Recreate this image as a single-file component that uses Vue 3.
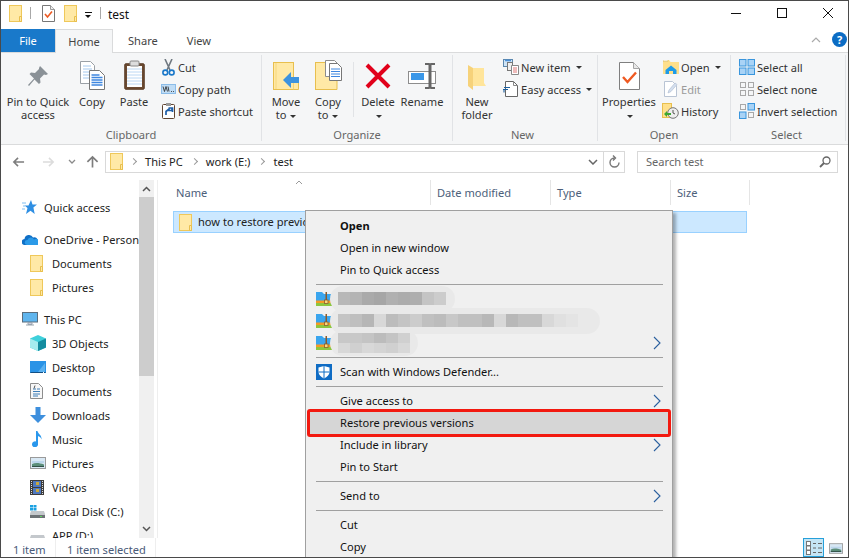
<script setup>
const clipboardLarge = [
  { icon: 'pin', w: 74, iw: 22, ih: 25, lines: ['Pin to Quick', 'access'] },
  { icon: 'copy', w: 34, iw: 25, ih: 29, lines: ['Copy'] },
  { icon: 'paste', w: 50, iw: 21, ih: 30, lines: ['Paste'] }
]
const clipboardSmall = [
  { icon: 'cut', text: 'Cut', iw: 13, ih: 17 },
  { icon: 'copypath', text: 'Copy path', iw: 15, ih: 10 },
  { icon: 'shortcut', text: 'Paste shortcut', iw: 13, ih: 16 }
]
const organizeA = [
  { icon: 'moveto', w: 40, iw: 27, ih: 28, lines: ['Move', 'to'], caretInline: true },
  { icon: 'copyto', w: 44, iw: 27, ih: 30, lines: ['Copy', 'to'], caretInline: true }
]
const organizeB = [
  { icon: 'delete', w: 40, iw: 26, ih: 27, lines: ['Delete'], caretBelow: true },
  { icon: 'rename', w: 48, iw: 28, ih: 27, lines: ['Rename'] }
]
const newSmall = [
  { icon: 'newitem', text: 'New item', iw: 16, ih: 16, caret: true },
  { icon: 'easy', text: 'Easy access', iw: 15, ih: 16, caret: true }
]
const openSmall = [
  { icon: 'open', text: 'Open', iw: 16, ih: 14, caret: true },
  { icon: 'edit', text: 'Edit', iw: 14, ih: 16, dim: true },
  { icon: 'history', text: 'History', iw: 17, ih: 16 }
]
const selectSmall = [
  { icon: 'selall', text: 'Select all' },
  { icon: 'selnone', text: 'Select none' },
  { icon: 'selinv', text: 'Invert selection' }
]
const nav = [
  { icon: 'quick', text: 'Quick access', top: 15, sub: false, iw: 15, ih: 14 },
  { icon: 'cloud', text: 'OneDrive - Personal', top: 8, sub: false, iw: 16, ih: 11 },
  { icon: 'folder', text: 'Documents', sub: true, iw: 13, ih: 17 },
  { icon: 'folder', text: 'Pictures', sub: true, iw: 13, ih: 17 },
  { icon: 'pc', text: 'This PC', top: 8, sub: false, iw: 16, ih: 14 },
  { icon: 'cube', text: '3D Objects', sub: true, iw: 16, ih: 16 },
  { icon: 'desktop', text: 'Desktop', sub: true, iw: 16, ih: 12 },
  { icon: 'docs', text: 'Documents', sub: true, iw: 13, ih: 16 },
  { icon: 'down', text: 'Downloads', sub: true, iw: 16, ih: 16 },
  { icon: 'music', text: 'Music', sub: true, iw: 13, ih: 16 },
  { icon: 'pics', text: 'Pictures', sub: true, iw: 16, ih: 12 },
  { icon: 'video', text: 'Videos', sub: true, iw: 14, ih: 15 },
  { icon: 'disk', text: 'Local Disk (C:)', sub: true, iw: 15, ih: 13 },
  { icon: 'disk2', text: 'APP (D:)', sub: true, iw: 15, ih: 13 }
]
const columns = [
  { text: 'Name', w: 256 },
  { text: 'Date modified', w: 120 },
  { text: 'Type', w: 120 },
  { text: 'Size', w: 79 }
]
const mosaics = [
  { width: 125, cells: [0xb8, 0xb4, 0xaa, 0xa6, 0xb0, 0xac, 0xae, 0xc4, 0xcc] },
  { width: 270, cells: [0xc4, 0xbf, 0xb6, 0xd8, 0xbc, 0xc4, 0xcc, 0xc0, 0xbc, 0xc8, 0xc0, 0xc0, 0xb8, 0xd8, 0xb8, 0xc0, 0xc0, 0xd8, 0xe0, 0xe4] },
  { width: 88, cells: [0xc8, 0xc8, 0xc4, 0xbc, 0xc4, 0xd0, 0xd8, 0xd0, 0xd8, 0xd4, 0xd0, 0xd8] }
]
const grey = v => `rgb(${v},${v},${v})`
</script>

<template>
  <svg class="defs" width="0" height="0" aria-hidden="true">
    <symbol id="folder" viewBox="0 0 13 17"><rect x=".5" y=".5" width="12" height="16" fill="#ffe9a6" stroke="#efc85a"/><path d="M10.500 11.500h2v5h-2z" fill="#ffe9a6" stroke="#e8bf4e"/></symbol>
    <symbol id="doccheck" viewBox="0 0 13 17"><path d="M.5.500h8l4 4v12H.5z" fill="#fff" stroke="#777"/><path d="M8.500.500v4h4" fill="#eee" stroke="#999"/><path d="M3 9l2.500 3L10 6.500" fill="none" stroke="#ec5b24" stroke-width="1.600"/></symbol>
    <symbol id="pin" viewBox="0 0 22 25"><path d="M13 1l8 8-2 1-2-.5-4 4 .5 4-1.500 1.500-4.500-4.500L2 21l-1-1 6-6.500L2.500 9 4 7.500l4 .5 4-4L12 3z" fill="#8a9197"/></symbol>
    <symbol id="copy" viewBox="0 0 25 29"><path d="M.5.500h10l4 4v18H.5z" fill="#fff" stroke="#9aa0a6"/><path d="M3 5h8M3 8h9M3 11h9M3 14h9M3 17h9" stroke="#a4c8ee"/><path d="M9.500 9.500h10l5 5v14h-15z" fill="#fff" stroke="#777"/><path d="M11.500 14h8M11.500 16.500h11M11.500 19h11M11.500 21.500h11M11.500 24h11" stroke="#3f87e0" stroke-width="1.300"/></symbol>
    <symbol id="paste" viewBox="0 0 21 30"><rect x=".75" y="3.750" width="19.500" height="25.500" rx="1" fill="#6b4a32" stroke="#5a3c26"/><rect x="3" y="6" width="15" height="21" fill="#fff"/><path d="M3 9h15M3 12h15M3 15h15M3 18h15M3 21h15M3 24h15" stroke="#bcd8f4"/><rect x="6" y="1" width="9" height="5" rx="1" fill="#ddd" stroke="#888"/></symbol>
    <symbol id="cut" viewBox="0 0 13 17"><path d="M3 0l5 11M10 0L5 11" stroke="#6f7880" stroke-width="1.600" fill="none"/><circle cx="3.300" cy="13.500" r="2.400" fill="none" stroke="#1a78c9" stroke-width="1.600"/><circle cx="9.700" cy="13.500" r="2.400" fill="none" stroke="#1a78c9" stroke-width="1.600"/></symbol>
    <symbol id="copypath" viewBox="0 0 15 10"><rect x=".5" y=".5" width="14" height="9" fill="#bfdcf5" stroke="#8bbce8"/><path d="M2 2.500l1.500 5 1.500-5 1.500 5M7 2.500l1 5" stroke="#333" fill="none" stroke-width=".9"/><path d="M10 7.500h.8M12 7.500h.8" stroke="#333"/></symbol>
    <symbol id="shortcut" viewBox="0 0 13 16"><rect x=".5" y="1.500" width="12" height="14" rx="1" fill="#fff" stroke="#5f4431"/><rect x="4" y="0" width="5" height="3" fill="#999"/><path d="M4 12V8.500L7 6v1.500h3V5.500M6.500 5h4v4" fill="none" stroke="#1f5fa8" stroke-width="1.700"/></symbol>
    <symbol id="moveto" viewBox="0 0 27 28"><rect x=".5" y=".5" width="20" height="27" fill="#ffe9a6" stroke="#e8bf4e"/><path d="M3 1v26" stroke="#f6d77c"/><path d="M20.500 19.500h5v8h-5" fill="#ffe9a6" stroke="#e8bf4e"/><path d="M10 18l8-8v5h8v6h-8v5z" fill="#3d93de"/></symbol>
    <symbol id="copyto" viewBox="0 0 27 30"><rect x=".5" y="2.500" width="21" height="27" fill="#ffe9a6" stroke="#e8bf4e"/><path d="M18 19.500h4v10h-4" fill="#ffe9a6" stroke="#e8bf4e"/><path d="M10.500.500h9l3 3v13h-12z" fill="#fff" stroke="#8c8c8c"/><path d="M14.500 3.500h8l4 4v13h-12z" fill="#fff" stroke="#777"/><path d="M16 9h9M16 11.500h9M16 14h9M16 16.500h9" stroke="#3f87e0"/></symbol>
    <symbol id="delete" viewBox="0 0 26 27"><path d="M2 2l22 22M24 2L2 24" stroke="#e1001a" stroke-width="4"/></symbol>
    <symbol id="rename" viewBox="0 0 28 27"><rect x=".5" y="8.500" width="27" height="12" fill="#fff" stroke="#8d8d8d"/><rect x="3" y="10" width="13" height="7" fill="#3a97e8"/><path d="M17 1h4l1 1 1-1h4M17 25h4l1-1 1 1h4" stroke="#666" stroke-width="1.800" fill="none"/><path d="M22 2v22" stroke="#666" stroke-width="3"/></symbol>
    <symbol id="newfolder" viewBox="0 0 20 26"><path d="M1 1l5 3v22L1 22z" fill="#f6d27a"/><path d="M6 4h11v15l2 3H6z" fill="#ffe59b"/></symbol>
    <symbol id="newitem" viewBox="0 0 16 16"><rect x=".5" y=".5" width="9" height="7" fill="#cfe4f6" stroke="#5b87ad"/><path d="M2 1.500h6" stroke="#4a90d9" stroke-width="1.500"/><rect x="4.500" y="3.500" width="5" height="8" fill="#f0f0f0" stroke="#777"/><path d="M8.500 6.500h7v9h-7z" fill="#fff" stroke="#888"/><path d="M10 9h4M10 11h4M10 13h4" stroke="#d77"/></symbol>
    <symbol id="easy" viewBox="0 0 15 16"><path d="M2.500.500h8l4 4v11h-12z" fill="#fff" stroke="#666"/><path d="M10.500.500v4h4" fill="none" stroke="#888"/><path d="M1 6.500h6M0 8.500h5M1 8.500v3" stroke="#1b5f9e" stroke-width="1.100" fill="none"/></symbol>
    <symbol id="props" viewBox="0 0 21 28"><path d="M.5.500h14l6 6v21H.5z" fill="#fff" stroke="#7f7f7f"/><path d="M14.500.500v6h6" fill="#e8e8e8" stroke="#a5a5a5"/><path d="M4 15l4.500 5L17 10.500" fill="none" stroke="#ef5a22" stroke-width="2.400"/></symbol>
    <symbol id="open" viewBox="0 0 16 14"><path d="M0 0h6l1.500 2H16v12H0z" fill="#ffdf8a"/><path d="M0 0h5v1.500H0z" fill="#fff" stroke="#d6b04a" stroke-width=".5"/><path d="M2.500 10L8 5.500 13.500 10v4H10v-3H6v3H2.500z" fill="#1e9be8"/></symbol>
    <symbol id="edit" viewBox="0 0 14 16"><path d="M.5.500h8l4 4v11H.5z" fill="#fff" stroke="#b9c4d4"/><path d="M4 12l1-3 6-7 2 1.500-6 7z" fill="#d4dfee" stroke="#b4c2d6" stroke-width=".7"/></symbol>
    <symbol id="history" viewBox="0 0 17 16"><rect x=".5" y=".5" width="9" height="14" fill="#ffe08c" stroke="#e8bf4e"/><circle cx="11" cy="10" r="5.300" fill="#eee" stroke="#777"/><path d="M11 7v3l2 1" stroke="#555" fill="none"/><path d="M2 11l3-3v2h4v2H5v2z" fill="#3da733"/></symbol>
    <symbol id="selall" viewBox="0 0 16 16"><rect x=".5" y=".5" width="6.500" height="6.500" fill="#a9d3f6" stroke="#3a96dd"/><rect x="9" y=".5" width="6.500" height="6.500" fill="#a9d3f6" stroke="#3a96dd"/><rect x=".5" y="9" width="6.500" height="6.500" fill="#a9d3f6" stroke="#3a96dd"/><rect x="9" y="9" width="6.500" height="6.500" fill="#a9d3f6" stroke="#3a96dd"/></symbol>
    <symbol id="selnone" viewBox="0 0 16 16"><g fill="none" stroke="#a8a8a8"><rect x="1.500" y="1.500" width="5" height="5"/><rect x="9.500" y="1.500" width="5" height="5"/><rect x="1.500" y="9.500" width="5" height="5"/><rect x="9.500" y="9.500" width="5" height="5"/></g></symbol>
    <symbol id="selinv" viewBox="0 0 16 16"><g fill="none" stroke="#a8a8a8"><rect x="1.500" y="1.500" width="5" height="5"/><rect x="9.500" y="9.500" width="5" height="5"/></g><rect x="9" y=".5" width="6.500" height="6.500" fill="#a9d3f6" stroke="#3a96dd"/><rect x=".5" y="9" width="6.500" height="6.500" fill="#a9d3f6" stroke="#3a96dd"/></symbol>
    <symbol id="quick" viewBox="0 0 15 14"><path d="M9 0l1.500 4.500H15l-3.600 2.900L12.700 14 8.500 10.800 4 14l1.500-6L2.500 5.500h4z" fill="#2f8fe3"/><path d="M0 3h4M1 6h2M0 9h3" stroke="#7fbdf0"/></symbol>
    <symbol id="cloud" viewBox="0 0 16 11"><path d="M3 11a3 3 0 0 1-.5-6 4.500 4.500 0 0 1 8.500-1.500A3.500 3.500 0 0 1 13 11z" fill="#0f6fc6"/><path d="M5 11a2.500 2.500 0 0 1 .5-5 3.500 3.500 0 0 1 6.500-.5 3 3 0 0 1 3.800 5.500z" fill="#2b9ae8"/></symbol>
    <symbol id="pc" viewBox="0 0 16 14"><rect x=".5" y=".5" width="15" height="9.500" fill="#5fb5ee" stroke="#5a6d7d"/><path d="M6 10.500h4v2H6zM4 13h8" stroke="#98a4ae" fill="#ccd"/></symbol>
    <symbol id="cube" viewBox="0 0 16 16"><path d="M8 0l8 3.500v9L8 16 0 12.500v-9z" fill="#3fd0db"/><path d="M0 3.500L8 7v9L0 12.500z" fill="#a6ecef"/><path d="M16 3.500L8 7v9l8-3.500z" fill="#148c9f"/></symbol>
    <symbol id="desktop" viewBox="0 0 16 12"><rect width="16" height="12" fill="#2a93e6"/><path d="M8 11l7-9v9z" fill="#5cb2f0"/><path d="M.5 11.500h15" stroke="#124f84"/><path d="M13 11.500h1" stroke="#fff"/></symbol>
    <symbol id="docs" viewBox="0 0 13 16"><path d="M.5.500h8l4 4v11H.5z" fill="#f7f7f7" stroke="#8d8d8d"/><path d="M3 6h3M7 6h3M3 8.500h7M3 11h7M3 13h5" stroke="#3f7fb8"/><path d="M5 2.500l-1 3" stroke="#555"/></symbol>
    <symbol id="down" viewBox="0 0 16 16"><path d="M5.500 0h5v8H16l-8 8-8-8h5.500z" fill="#3d8fdd"/></symbol>
    <symbol id="music" viewBox="0 0 13 16"><path d="M6 0h1.500c.5 3 4.500 4 4 8.500C11 6 9 5.500 8 5v8a3 3 0 1 1-2-2.500z" fill="#2a97ec"/></symbol>
    <symbol id="pics" viewBox="0 0 16 12"><rect x=".5" y=".5" width="15" height="11" fill="#d8e8f4" stroke="#9a9a9a"/><path d="M2 4h12v2H2z" fill="#bcd6ec"/><path d="M2 7c3-1.500 8-1 12 .5V10H2z" fill="#5b8e7a"/><path d="M2 9h12v1H2z" fill="#324f47"/></symbol>
    <symbol id="video" viewBox="0 0 14 15"><rect width="14" height="15" fill="#3d3d3d"/><rect x="3" y="1" width="8" height="6" fill="#4f79c0"/><rect x="3" y="8" width="8" height="6" fill="#4f79c0"/><rect x="6" y="2" width="3" height="3" fill="#c9a83d"/><rect x="6" y="9" width="3" height="3" fill="#c9a83d"/><path d="M1.500 1v13M12.500 1v13" stroke="#ddd" stroke-dasharray="1 1"/></symbol>
    <symbol id="disk" viewBox="0 0 15 13"><path d="M1 6h13l1 3v4H0V9z" fill="#c4c8cc"/><rect y="10" width="15" height="3" fill="#6d7276"/><rect x="10" y="11" width="2" height="1" fill="#5fd45f"/><rect width="3" height="2.500" fill="#1ba1e2"/><rect x="3.500" width="3" height="2.500" fill="#1ba1e2"/><rect y="3" width="3" height="2.500" fill="#1ba1e2"/><rect x="3.500" y="3" width="3" height="2.500" fill="#1ba1e2"/></symbol>
    <symbol id="disk2" viewBox="0 0 15 13"><path d="M1 6h13l1 3v4H0V9z" fill="#c4c8cc"/><rect y="10" width="15" height="3" fill="#6d7276"/></symbol>
    <symbol id="zip" viewBox="0 0 16 14"><path d="M0 0h6l2 2h8v7H0z" fill="#3aa5ee"/><rect y="8.500" width="16" height="2.500" fill="#f59a23"/><rect y="11" width="16" height="3" fill="#8cc63f"/><rect x="9.500" width="1.500" height="8" fill="#8a5a2a"/><rect x="8.500" y="8" width="3.500" height="3.500" fill="#f8d878" stroke="#8a5a2a" stroke-width=".8"/></symbol>
    <symbol id="defender" viewBox="0 0 16 16"><rect width="16" height="16" fill="#0f6cc4"/><path d="M8 2l5.500 1.500V8c0 3-2.500 5-5.500 6.500C5 13 2.500 11 2.500 8V3.500z" fill="#fff"/><path d="M8 2v12.500M2.500 8h11" stroke="#0f6cc4"/></symbol>
    <symbol id="menuarrow" viewBox="0 0 8 14"><path d="M1 1l6 6-6 6" fill="none" stroke="#2a5f9e" stroke-width="1.100"/></symbol>
  </svg>

  <div class="window">
    <header class="titlebar">
      <svg class="ic" width="13" height="17"><use href="#folder"/></svg>
      <i class="qsep"></i>
      <svg class="ic ic-check" width="13" height="17"><use href="#doccheck"/></svg>
      <svg class="ic ic-qf" width="13" height="17"><use href="#folder"/></svg>
      <span class="qdrop"></span>
      <i class="qsep qsep2"></i>
      <span class="title">test</span>
      <div class="winctl">
        <svg width="12" height="12" viewBox="0 0 12 12"><path d="M1 6.500h10" stroke="#111"/></svg>
        <svg width="12" height="12" viewBox="0 0 12 12"><rect x="1.500" y="1.500" width="9" height="9" fill="none" stroke="#111"/></svg>
        <svg width="12" height="12" viewBox="0 0 12 12"><path d="M1 1l10 10M11 1L1 11" stroke="#111"/></svg>
      </div>
    </header>

    <nav class="tabs">
      <span class="tab tab-file">File</span>
      <span class="tab tab-home">Home</span>
      <span class="tab tab-share">Share</span>
      <span class="tab tab-view">View</span>
      <svg class="collapse" width="10" height="6" viewBox="0 0 10 6"><path d="M1 5l4-4 4 4" fill="none" stroke="#aaa" stroke-width="1.200"/></svg>
      <span class="help">?</span>
    </nav>

    <section class="ribbon">
      <div class="group g-clip">
        <div class="group-body">
          <div v-for="b in clipboardLarge" :key="b.icon" class="big" :style="{ width: b.w + 'px' }">
            <div class="big-icon"><svg :width="b.iw" :height="b.ih"><use :href="'#' + b.icon"/></svg></div>
            <span v-for="l in b.lines" :key="l" class="big-line">{{ l }}</span>
          </div>
          <div class="smalls">
            <div v-for="s in clipboardSmall" :key="s.text" class="small">
              <span class="small-ic"><svg :width="s.iw" :height="s.ih"><use :href="'#' + s.icon"/></svg></span>{{ s.text }}
            </div>
          </div>
        </div>
        <div class="group-label">Clipboard</div>
      </div>

      <div class="group g-org">
        <div class="group-body">
          <div v-for="b in organizeA" :key="b.icon" class="big" :style="{ width: b.w + 'px' }">
            <div class="big-icon"><svg :width="b.iw" :height="b.ih"><use :href="'#' + b.icon"/></svg></div>
            <span class="big-line">{{ b.lines[0] }}</span>
            <span class="big-line">{{ b.lines[1] }} <i class="caret"></i></span>
          </div>
          <i class="inner-sep"></i>
          <div v-for="b in organizeB" :key="b.icon" class="big" :style="{ width: b.w + 'px' }">
            <div class="big-icon"><svg :width="b.iw" :height="b.ih"><use :href="'#' + b.icon"/></svg></div>
            <span class="big-line">{{ b.lines[0] }}</span>
            <span v-if="b.caretBelow" class="big-line"><i class="caret"></i></span>
          </div>
        </div>
        <div class="group-label">Organize</div>
      </div>

      <div class="group g-new">
        <div class="group-body">
          <div class="big w-newfolder">
            <div class="big-icon"><svg width="20" height="26"><use href="#newfolder"/></svg></div>
            <span class="big-line">New</span>
            <span class="big-line">folder</span>
          </div>
          <div class="smalls">
            <div v-for="s in newSmall" :key="s.text" class="small wide-slot">
              <span class="small-ic"><svg :width="s.iw" :height="s.ih"><use :href="'#' + s.icon"/></svg></span>{{ s.text }}<i class="caret caret-s"></i>
            </div>
          </div>
        </div>
        <div class="group-label">New</div>
      </div>

      <div class="group g-open">
        <div class="group-body">
          <div class="big w-props">
            <div class="big-icon"><svg width="21" height="28"><use href="#props"/></svg></div>
            <span class="big-line">Properties</span>
            <span class="big-line"><i class="caret"></i></span>
          </div>
          <div class="smalls">
            <div v-for="s in openSmall" :key="s.text" class="small wide-slot" :class="{ dim: s.dim }">
              <span class="small-ic"><svg :width="s.iw" :height="s.ih"><use :href="'#' + s.icon"/></svg></span>{{ s.text }}<i v-if="s.caret" class="caret caret-s"></i>
            </div>
          </div>
        </div>
        <div class="group-label">Open</div>
      </div>

      <div class="group g-sel">
        <div class="group-body">
          <div class="smalls">
            <div v-for="s in selectSmall" :key="s.text" class="small wide-slot">
              <span class="small-ic"><svg width="16" height="16"><use :href="'#' + s.icon"/></svg></span>{{ s.text }}
            </div>
          </div>
        </div>
        <div class="group-label">Select</div>
      </div>
    </section>

    <div class="navbar">
      <svg width="13" height="12" viewBox="0 0 14 12"><path d="M13 6H2M6.500 1.500L2 6l4.500 4.500" fill="none" stroke="#7d7d7d" stroke-width="1.700"/></svg>
      <svg class="nav-fwd" width="13" height="12" viewBox="0 0 14 12"><path d="M1 6h11M7.500 1.500L12 6l-4.500 4.500" fill="none" stroke="#dcdcdc" stroke-width="1.700"/></svg>
      <svg class="nav-drop" width="8" height="5" viewBox="0 0 8 5"><path d="M1 1l3 3 3-3" fill="none" stroke="#8a8a8a" stroke-width="1.300"/></svg>
      <svg class="nav-up" width="13" height="13" viewBox="0 0 14 13"><path d="M7 13V2M1.500 7L7 1.500 12.500 7" fill="none" stroke="#7d7d7d" stroke-width="1.800"/></svg>
      <div class="address">
        <svg width="13" height="17"><use href="#folder"/></svg>
        <i class="crumb first"></i><span>This PC</span>
        <i class="crumb"></i><span>work (E:)</span>
        <i class="crumb"></i><span>test</span>
        <svg class="addr-chev" width="10" height="6" viewBox="0 0 10 6"><path d="M1 1l4 4 4-4" fill="none" stroke="#666" stroke-width="1.500"/></svg>
        <i class="addr-sep"></i>
        <svg class="addr-ref" width="11" height="13" viewBox="0 0 11 13"><path d="M5.500 3a4.500 4.500 0 1 0 4.500 4.500M4 .5L6.500 3 4 5.500" fill="none" stroke="#777" stroke-width="1.400"/></svg>
      </div>
      <div class="search">
        <span>Search test</span>
        <svg width="12" height="12" viewBox="0 0 12 12"><circle cx="7.500" cy="4.500" r="3.500" fill="none" stroke="#666" stroke-width="1.300"/><path d="M5 7L1 11" stroke="#666" stroke-width="1.800"/></svg>
      </div>
    </div>

    <main class="main">
      <aside class="sidebar">
        <div class="nav-list">
          <div v-for="n in nav" :key="n.text + n.icon" class="nav-row" :class="{ sub: n.sub }" :style="{ marginTop: (n.top || 0) + 'px' }">
            <span class="nav-ic"><svg :width="n.iw" :height="n.ih"><use :href="'#' + n.icon"/></svg></span>
            <span class="nav-text">{{ n.text }}</span>
          </div>
        </div>
        <div class="scrollbar">
          <svg width="9" height="6" viewBox="0 0 9 6"><path d="M1 5l3.500-3.500L8 5" fill="none" stroke="#555" stroke-width="1.500"/></svg>
          <div class="track"><div class="thumb"></div></div>
          <svg width="9" height="6" viewBox="0 0 9 6"><path d="M1 1l3.500 3.500L8 1" fill="none" stroke="#555" stroke-width="1.500"/></svg>
        </div>
      </aside>
      <section class="files">
        <svg class="sort" width="8" height="4" viewBox="0 0 8 4"><path d="M1 4l3-3 3 3" fill="none" stroke="#9a9a9a"/></svg>
        <div class="headers">
          <div v-for="c in columns" :key="c.text" class="col" :style="{ width: c.w + 'px' }">{{ c.text }}</div>
        </div>
        <div class="file-row">
          <svg width="13" height="17"><use href="#folder"/></svg>
          <span>how to restore previous versions</span>
        </div>
      </section>
    </main>

    <footer class="status">
      <span class="st st1">1 item</span>
      <span class="st st2">1 item selected</span>
      <div class="views">
        <div class="view-on">
          <svg width="16" height="14" viewBox="0 0 16 14"><g fill="#fff" stroke="#777"><rect x=".5" y=".5" width="4" height="4"/><rect x=".5" y="5" width="4" height="4"/><rect x=".5" y="9.500" width="4" height="4"/></g><path d="M7 2.500h3M12 2.500h4M7 7h3M12 7h4M7 11.500h3M12 11.500h4" stroke="#666"/></svg>
        </div>
        <svg class="view-off" width="14" height="11"><use href="#pics"/></svg>
      </div>
    </footer>

    <div class="menu">
      <div class="mi bold">Open</div>
      <div class="mi">Open in new window</div>
      <div class="mi">Pin to Quick access</div>
      <hr class="ms">
      <div v-for="(m, i) in mosaics" :key="i" class="mi mi-zip">
        <svg class="mi-ic" width="16" height="14"><use href="#zip"/></svg>
        <div class="blob" :style="{ width: m.width + 'px' }"></div>
        <div class="cells" :class="{ two: i === 2 }">
          <i v-for="(c, j) in m.cells" :key="j" :style="{ background: grey(c) }"></i>
        </div>
        <svg v-if="i === 2" class="arrow" width="8" height="14"><use href="#menuarrow"/></svg>
      </div>
      <hr class="ms">
      <div class="mi"><svg class="mi-ic" width="16" height="16"><use href="#defender"/></svg>Scan with Windows Defender...</div>
      <hr class="ms">
      <div class="mi">Give access to<svg class="arrow" width="8" height="14"><use href="#menuarrow"/></svg></div>
      <div class="mi mi-hot">Restore previous versions</div>
      <div class="mi">Include in library<svg class="arrow" width="8" height="14"><use href="#menuarrow"/></svg></div>
      <div class="mi">Pin to Start</div>
      <hr class="ms">
      <div class="mi">Send to<svg class="arrow" width="8" height="14"><use href="#menuarrow"/></svg></div>
      <hr class="ms">
      <div class="mi">Cut</div>
      <div class="mi">Copy</div>
    </div>
  </div>
</template>

<style>
html, body { background: #fff; }
</style>

<style scoped>
.defs { position: absolute; }
svg { display: block; flex: none; }
.window {
  position: relative;
  box-sizing: border-box;
  width: 849px;
  height: 558px;
  border: 1px solid #4a4a4a;
  background: #fff;
  overflow: hidden;
  font-family: "Noto Sans", "Open Sans", sans-serif;
  font-size: 11.1px;
  color: #222;
  display: flex;
  flex-direction: column;
}
.titlebar { height: 28px; display: flex; align-items: center; padding: 0 0 4px 8px; box-sizing: border-box; flex: none; }
.qsep { width: 1px; height: 12px; background: #a8a8a8; margin-left: 8px; }
.ic-check { margin-left: 11px; }
.ic-qf { margin-left: 9px; }
.qdrop { width: 7px; height: 5px; margin-left: 8px; margin-top: 4px; border-top: 1px solid #111; position: relative; }
.qdrop::after { content: ""; position: absolute; left: 0; top: 2px; border: 3.5px solid transparent; border-top: 3.5px solid #111; border-bottom: 0; }
.qsep2 { margin-left: 8px; }
.title { margin-left: 7px; margin-top: 2px; font-size: 12px; color: #111; }
.winctl { margin-left: auto; display: flex; gap: 34px; padding-right: 14px; }

.tabs { height: 24px; flex: none; display: flex; position: relative; border-bottom: 1px solid #dadbdc; box-sizing: border-box; }
.tab { display: flex; align-items: center; color: #444; }
.tab-file { width: 54px; justify-content: center; background: #1979ca; color: #fff; }
.tab-home { width: 58px; height: 24px; box-sizing: border-box; justify-content: center; background: #f5f6f7; border: 1px solid #dadbdc; border-bottom: 0; }
.tab-share { margin-left: 15px; }
.tab-view { margin-left: 29px; }
.collapse { margin-left: auto; margin-top: 8px; }
.help { margin: 3px 1px 0 11px; width: 15px; height: 15px; border-radius: 50%; background: #0b6cc4; color: #fff; font-weight: 700; font-size: 11px; text-align: center; line-height: 15px; }

.ribbon { height: 92px; flex: none; display: flex; background: #f5f6f7; border-bottom: 1px solid #dadbdc; box-sizing: border-box; padding-top: 2px; }
.group { box-sizing: border-box; border-right: 1px solid #e1e3e6; height: 86px; display: flex; flex-direction: column; }
.g-clip { width: 261px; }
.g-org { width: 191px; padding-left: 4px; }
.g-new { width: 145px; padding-left: 3px; }
.g-open { width: 133px; }
.g-sel { width: 115px; padding-left: 5px; }
.group-body { flex: 1; display: flex; min-height: 0; }
.group-label { height: 13px; line-height: 13px; text-align: center; color: #666; }
.g-org .group-label { margin-left: -4px; }
.g-new .group-label { margin-left: -8px; }
.g-sel .group-label { margin-left: -8px; }
.big { flex: none; display: flex; flex-direction: column; align-items: center; }
.big-icon { height: 35px; display: flex; align-items: flex-end; justify-content: center; margin-bottom: 5px; }
.big-line { height: 13px; line-height: 13px; white-space: nowrap; color: #333; }
.w-newfolder { width: 42px; margin-right: 2px; }
.w-props { width: 62px; }
.inner-sep { width: 1px; height: 55px; background: #e1e3e6; margin: 7px 4px 0 3px; }
.caret { display: inline-block; width: 0; height: 0; border: 3px solid transparent; border-top: 3px solid #333; border-bottom: 0; vertical-align: middle; margin-left: 1px; }
.caret-s { margin-left: 5px; }
.smalls { display: flex; flex-direction: column; padding-top: 1px; }
.small { height: 22px; display: flex; align-items: center; white-space: nowrap; color: #333; }
.small .small-ic { width: 19px; display: flex; justify-content: center; flex: none; }
.wide-slot .small-ic { width: 21px; }
.small.dim { color: #9a9a9a; }

.navbar { height: 35px; flex: none; display: flex; align-items: center; padding: 0 0 2px 11px; box-sizing: border-box; position: relative; }
.nav-fwd { margin-left: 17px; }
.nav-drop { margin-left: 13px; }
.nav-up { margin-left: 10px; }
.address { margin-left: 6px; width: 520px; height: 22px; box-sizing: border-box; border: 1px solid #d9d9d9; display: flex; align-items: center; padding-left: 4px; color: #222; }
.crumb { width: 4px; height: 4px; border: solid #999; border-width: 1.300px 1.300px 0 0; transform: rotate(45deg); margin: 0 9px 0 6px; }
.crumb.first { margin-left: 8px; }
.address span { margin: 0 3px 0 0; }
.addr-chev { margin-left: auto; }
.addr-sep { width: 1px; height: 20px; background: #d9d9d9; margin-left: 5px; }
.addr-ref { margin: 0 4px 0 5px; }
.search { margin-left: 12px; width: 201px; height: 22px; box-sizing: border-box; border: 1px solid #d9d9d9; display: flex; align-items: center; justify-content: space-between; padding: 0 6px 0 8px; color: #666; }

.main { flex: 1; display: flex; min-height: 0; }
.sidebar { width: 153px; flex: none; display: flex; }
.nav-list { width: 138px; flex: none; overflow: hidden; }
.nav-row { height: 24px; display: flex; align-items: center; padding-left: 21px; }
.nav-row.sub { padding-left: 29px; }
.nav-ic { width: 22px; display: flex; align-items: center; flex: none; }
.nav-text { white-space: nowrap; }
.scrollbar { width: 15px; flex: none; background: #f0f0f0; display: flex; flex-direction: column; align-items: center; justify-content: space-between; padding: 6px 0; box-sizing: border-box; position: relative; }
.track { flex: 1; width: 15px; position: relative; }
.thumb { width: 15px; height: 179px; background: #cdcdcd; margin-top: 5px; }
.files { flex: 1; border-left: 1px solid #eee; margin-left: 3px; position: relative; min-width: 0; padding-left: 17px; }
.sort { position: absolute; left: 137px; top: 0; }
.headers { display: flex; height: 26px; }
.col { box-sizing: border-box; border-right: 1px solid #e5e5e5; padding-left: 1px; display: flex; align-items: center; color: #4c607a; height: 25px; }
.col + .col { padding-left: 6px; }
.file-row { margin: 5px 0 0 -2px; width: 574px; height: 22px; box-sizing: border-box; background: #cce8ff; border: 1px solid #99d1ff; display: flex; align-items: center; padding: 0 0 0 5px; gap: 6px; }
.file-row span { white-space: nowrap; margin-bottom: 2px; }

.status { height: 19px; flex: none; display: flex; align-items: center; position: relative; color: #4a5a78; }
.st { height: 19px; display: flex; align-items: center; box-sizing: border-box; border-right: 1px solid #eee; padding-top: 4px; }
.st1 { width: 55px; padding-left: 12px; }
.st2 { width: 100px; padding-left: 11px; }
.views { margin-left: auto; display: flex; align-items: center; padding-right: 5px; gap: 5px; height: 19px; }
.view-on { width: 21px; height: 19px; box-sizing: border-box; background: #c5e5f5; border: 1px solid #26a0da; display: flex; justify-content: center; align-items: center; }
.view-off { margin-top: 2px; }

.menu { position: absolute; left: 304px; top: 209px; width: 368px; height: 352px; box-sizing: border-box; padding-top: 4px; background: #f0f0f0; border: 1px solid #a0a0a0; box-shadow: 3px 3px 3px rgba(0, 0, 0, .3); color: #111; }
.mi { position: relative; height: 22px; box-sizing: border-box; padding: 0 0 2px 34px; display: flex; align-items: center; white-space: nowrap; }
.bold { font-weight: 700; }
.ms { height: 1px; border: 0; background: #a0a0a0; margin: 3px 9px 3px 10px; }
.mi-ic { position: absolute; left: 10px; top: 50%; transform: translateY(-50%); }
.arrow { position: absolute; left: 347px; top: 4px; }
.mi-hot { background: #d6d6d6; margin: 0 2px; padding-left: 32px; }
.mi-hot::after { content: ""; position: absolute; left: -1px; right: -1px; top: -3px; bottom: -3px; border: 3px solid #f2190f; border-radius: 3px; pointer-events: none; }
.blob { position: absolute; left: 24px; top: -2px; height: 26px; background: #e9e9e9; border-radius: 13px; }
.cells { position: absolute; left: 32px; top: 4px; display: flex; flex-wrap: wrap; width: 240px; }
.cells i { width: 12px; height: 13px; display: block; }
.cells.two { width: 72px; top: 1px; }
.cells.two i { height: 10px; }
</style>
